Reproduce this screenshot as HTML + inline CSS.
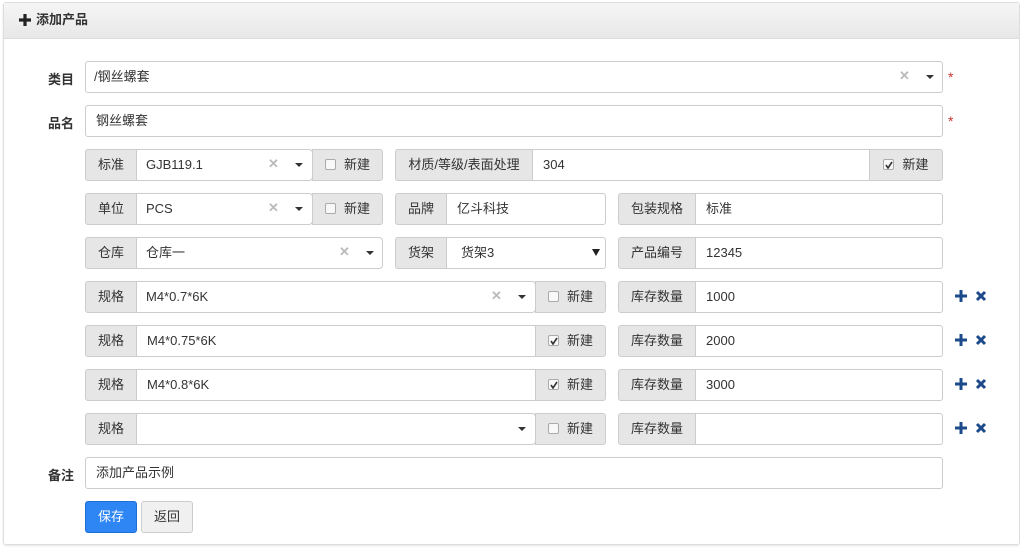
<!DOCTYPE html><html><head><meta charset="utf-8"><style>
*{box-sizing:border-box}body{margin:0;width:1020px;height:557px;background:#fff;font-family:"Liberation Sans","Noto Sans CJK SC",sans-serif;font-size:13px;color:#333;position:relative;overflow:hidden}
.a{position:absolute}
.panel{left:3px;top:2px;width:1017px;height:543px;border:1px solid #ddd;border-radius:3px;box-shadow:0 1px 2px rgba(0,0,0,.1)}
.hd{left:4px;top:3px;width:1015px;height:36px;background:linear-gradient(#f5f5f5,#e8e8e8);border-bottom:1px solid #ddd;font-weight:bold;font-size:13px;line-height:34px;padding-left:32px;color:#333}
.lb{font-weight:bold;font-size:13px;text-align:right;width:40px}
.in{border:1px solid #ccc;background:#fff;height:32px;line-height:30px;padding-left:10px;font-size:13px}
.ad{border:1px solid #ccc;background:#e6e6e6;height:32px;line-height:30px;text-align:center;font-size:13px}
.r{border-radius:3px}
.cb{display:inline-block;width:11px;height:11px;border:1px solid #aaa;border-radius:2px;background:#f8f8f8;vertical-align:-1px;margin-right:8px;position:relative}
.cb svg{position:absolute;left:1px;top:1px}
.x{color:#bbb;font-size:13px;font-weight:bold}
.car{width:0;height:0;border-left:4px solid transparent;border-right:4px solid transparent;border-top:4px solid #333}
.star{color:#c33;font-size:14px}
</style></head><body>
<div class="a panel"></div>
<div class="a hd">添加产品</div>
<svg class="a" style="left:19px;top:14px" width="12" height="12"><path d="M6 0v12M0 6h12" stroke="#222" stroke-width="3.2"/></svg>

<div class="a lb" style="left:34px;top:69px">类目</div>
<div class="a in r" style="left:85px;top:61px;width:858px;padding-left:8px">/钢丝螺套</div>
<div class="a x" style="left:899px;top:68px">✕</div><div class="a car" style="left:926px;top:75px"></div>
<div class="a star" style="left:948px;top:69px">*</div>

<div class="a lb" style="left:34px;top:113px">品名</div>
<div class="a in r" style="left:85px;top:105px;width:858px">钢丝螺套</div>
<div class="a star" style="left:948px;top:113px">*</div>

<div class="a ad" style="left:85px;top:149px;width:52px;border-radius:3px 0 0 3px">标准</div>
<div class="a in" style="left:136px;top:149px;width:177px;border-radius:0 4px 4px 0;padding-left:9px">GJB119.1</div>
<div class="a x" style="left:268px;top:156px">✕</div><div class="a car" style="left:295px;top:163px"></div>
<div class="a ad" style="left:312px;top:149px;width:71px;border-radius:0 3px 3px 0"><span class="cb"></span>新建</div>
<div class="a ad" style="left:395px;top:149px;width:138px;border-radius:3px 0 0 3px">材质/等级/表面处理</div>
<div class="a in" style="left:532px;top:149px;width:338px">304</div>
<div class="a ad" style="left:869px;top:149px;width:74px;border-radius:0 3px 3px 0"><span class="cb"><svg width="8" height="8"><path d="M1 4l2 3 4-6" stroke="#333" stroke-width="1.6" fill="none"/></svg></span>新建</div>

<div class="a ad" style="left:85px;top:193px;width:52px;border-radius:3px 0 0 3px">单位</div>
<div class="a in" style="left:136px;top:193px;width:177px;border-radius:0 4px 4px 0;padding-left:9px">PCS</div>
<div class="a x" style="left:268px;top:200px">✕</div><div class="a car" style="left:295px;top:207px"></div>
<div class="a ad" style="left:312px;top:193px;width:71px;border-radius:0 3px 3px 0"><span class="cb"></span>新建</div>
<div class="a ad" style="left:395px;top:193px;width:52px;border-radius:3px 0 0 3px">品牌</div>
<div class="a in" style="left:446px;top:193px;width:160px;border-radius:0 3px 3px 0">亿斗科技</div>
<div class="a ad" style="left:618px;top:193px;width:78px;border-radius:3px 0 0 3px">包装规格</div>
<div class="a in" style="left:695px;top:193px;width:248px;border-radius:0 3px 3px 0">标准</div>

<div class="a ad" style="left:85px;top:237px;width:52px;border-radius:3px 0 0 3px">仓库</div>
<div class="a in" style="left:136px;top:237px;width:247px;border-radius:0 4px 4px 0;padding-left:9px">仓库一</div>
<div class="a x" style="left:339px;top:244px">✕</div><div class="a car" style="left:366px;top:251px"></div>
<div class="a ad" style="left:395px;top:237px;width:52px;border-radius:3px 0 0 3px">货架</div>
<div class="a in" style="left:446px;top:237px;width:160px;border-radius:0 3px 3px 0;padding-left:14px">货架3</div>
<svg class="a" style="left:592px;top:249px" width="8" height="7"><path d="M0 0h8L4 7z" fill="#222"/></svg>
<div class="a ad" style="left:618px;top:237px;width:78px;border-radius:3px 0 0 3px">产品编号</div>
<div class="a in" style="left:695px;top:237px;width:248px;border-radius:0 3px 3px 0">12345</div>

<div class="a ad" style="left:85px;top:281px;width:52px;border-radius:3px 0 0 3px">规格</div>
<div class="a in" style="left:136px;top:281px;width:400px;border-radius:0 4px 4px 0;padding-left:9px">M4*0.7*6K</div>
<div class="a x" style="left:491px;top:288px">✕</div><div class="a car" style="left:518px;top:295px"></div>
<div class="a ad" style="left:535px;top:281px;width:71px;border-radius:0 3px 3px 0"><span class="cb"></span>新建</div>
<div class="a ad" style="left:618px;top:281px;width:78px;border-radius:3px 0 0 3px">库存数量</div>
<div class="a in" style="left:695px;top:281px;width:248px;border-radius:0 3px 3px 0">1000</div>

<div class="a ad" style="left:85px;top:325px;width:52px;border-radius:3px 0 0 3px">规格</div>
<div class="a in" style="left:136px;top:325px;width:400px">M4*0.75*6K</div>
<div class="a ad" style="left:535px;top:325px;width:71px;border-radius:0 3px 3px 0"><span class="cb"><svg width="8" height="8"><path d="M1 4l2 3 4-6" stroke="#333" stroke-width="1.6" fill="none"/></svg></span>新建</div>
<div class="a ad" style="left:618px;top:325px;width:78px;border-radius:3px 0 0 3px">库存数量</div>
<div class="a in" style="left:695px;top:325px;width:248px;border-radius:0 3px 3px 0">2000</div>

<div class="a ad" style="left:85px;top:369px;width:52px;border-radius:3px 0 0 3px">规格</div>
<div class="a in" style="left:136px;top:369px;width:400px">M4*0.8*6K</div>
<div class="a ad" style="left:535px;top:369px;width:71px;border-radius:0 3px 3px 0"><span class="cb"><svg width="8" height="8"><path d="M1 4l2 3 4-6" stroke="#333" stroke-width="1.6" fill="none"/></svg></span>新建</div>
<div class="a ad" style="left:618px;top:369px;width:78px;border-radius:3px 0 0 3px">库存数量</div>
<div class="a in" style="left:695px;top:369px;width:248px;border-radius:0 3px 3px 0">3000</div>

<div class="a ad" style="left:85px;top:413px;width:52px;border-radius:3px 0 0 3px">规格</div>
<div class="a in" style="left:136px;top:413px;width:400px;border-radius:0 4px 4px 0"></div>
<div class="a car" style="left:518px;top:427px"></div>
<div class="a ad" style="left:535px;top:413px;width:71px;border-radius:0 3px 3px 0"><span class="cb"></span>新建</div>
<div class="a ad" style="left:618px;top:413px;width:78px;border-radius:3px 0 0 3px">库存数量</div>
<div class="a in" style="left:695px;top:413px;width:248px;border-radius:0 3px 3px 0"></div>

<svg class="a" style="left:955px;top:290px" width="34" height="160">
<g stroke="#1d4a8a" fill="none">
<g id="p"><path d="M6 0v12M0 6h12" stroke-width="3"/><path d="M22 2l8 8M30 2l-8 8" stroke-width="3"/></g>
<g transform="translate(0,44)"><path d="M6 0v12M0 6h12" stroke-width="3"/><path d="M22 2l8 8M30 2l-8 8" stroke-width="3"/></g>
<g transform="translate(0,88)"><path d="M6 0v12M0 6h12" stroke-width="3"/><path d="M22 2l8 8M30 2l-8 8" stroke-width="3"/></g>
<g transform="translate(0,132)"><path d="M6 0v12M0 6h12" stroke-width="3"/><path d="M22 2l8 8M30 2l-8 8" stroke-width="3"/></g>
</g></svg>

<div class="a lb" style="left:34px;top:465px">备注</div>
<div class="a in r" style="left:85px;top:457px;width:858px">添加产品示例</div>

<div class="a r" style="left:85px;top:501px;width:52px;height:32px;background:#2d86f3;border:1px solid #1f6fd6;color:#fff;text-align:center;line-height:30px">保存</div>
<div class="a r" style="left:141px;top:501px;width:52px;height:32px;background:#f0f0f0;border:1px solid #ccc;text-align:center;line-height:30px">返回</div>
</body></html>
